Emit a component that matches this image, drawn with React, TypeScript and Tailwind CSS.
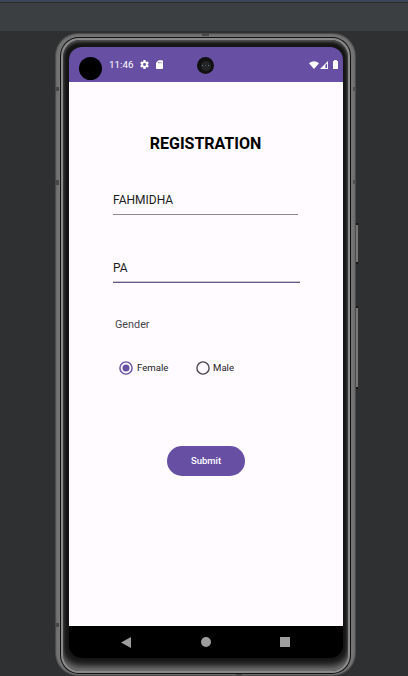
import React from "react";

function StatusBar() {
  return (
    <div className="relative flex h-[35px] items-center bg-[#6750a4] text-white">
      <div className="ml-[10px] mt-[8px] size-[23px] rounded-full bg-black" />
      <span className="ml-[7px] w-[24px] whitespace-nowrap text-[9.8px] leading-[12px]">11:46</span>
      <svg className="ml-[6px] size-[11px]" viewBox="0 0 24 24" fill="currentColor">
        <path d="M19.14 12.94c.04-.3.06-.61.06-.94s-.02-.64-.07-.94l2.03-1.58a.49.49 0 0 0 .12-.61l-1.92-3.32a.49.49 0 0 0-.59-.22l-2.39.96a7 7 0 0 0-1.62-.94l-.36-2.54a.48.48 0 0 0-.48-.41h-3.84a.48.48 0 0 0-.47.41l-.36 2.54c-.59.24-1.13.57-1.62.94l-2.39-.96a.48.48 0 0 0-.59.22L2.74 8.87a.48.48 0 0 0 .12.61l2.03 1.58a6 6 0 0 0 0 1.88l-2.03 1.58a.49.49 0 0 0-.12.61l1.92 3.32c.12.22.37.29.59.22l2.39-.96c.5.38 1.03.7 1.62.94l.36 2.54c.05.24.24.41.48.41h3.84c.24 0 .44-.17.47-.41l.36-2.54a7 7 0 0 0 1.62-.94l2.39.96c.22.08.47 0 .59-.22l1.92-3.32a.48.48 0 0 0-.12-.61zM12 15.2a3.2 3.2 0 1 1 0-6.4 3.2 3.2 0 0 1 0 6.400" />
      </svg>
      <svg className="ml-[6px] h-[9px] w-[7px]" viewBox="0 0 16 20" fill="currentColor">
        <path fillRule="evenodd" d="M6 0h8a2 2 0 0 1 2 2v16a2 2 0 0 1-2 2H2a2 2 0 0 1-2-2V6zM5 4v3h1.500V4zm3 0v3h1.500V4zm3 0v3h1.500V4z" />
      </svg>
      <svg className="ml-auto h-[8px] w-[10px]" viewBox="0 0 10 8" fill="currentColor">
        <path d="M0 2.2Q5-1.9 10 2.2L5 8z" />
      </svg>
      <svg className="ml-[1px] size-[8px]" viewBox="0 0 8 8" fill="currentColor">
        <path fillRule="evenodd" d="M0 8 8 0v8zM5.4 3.9v3.2h1.7V2.200z" />
      </svg>
      <svg className="ml-[5px] mr-[5px] h-[9px] w-[5px]" viewBox="0 0 5 9" fill="currentColor">
        <path d="M1.2 0h2.600v1H5v8H0V1h1.200z" />
      </svg>
      <div className="absolute left-[128px] top-[10px] flex size-[17px] items-center justify-center rounded-full bg-[#111]">
        <div className="flex size-[10px] items-center justify-center gap-[2px] rounded-full bg-[#242424]">
          <i className="size-[1px] bg-[#527b9b]" />
          <i className="size-[1px] bg-[#4a5663]" />
          <i className="size-[1px] bg-[#4d8294]" />
        </div>
      </div>
    </div>
  );
}

function RegistrationForm() {
  return (
    <div className="flex h-[544px] flex-col bg-[#fffbfe] text-[#1c1b1f]">
      <h1 className="mt-[51px] pr-[1px] text-center text-[16px] font-bold leading-[21px] text-black">REGISTRATION</h1>
      <div className="ml-[44px] mt-[38px] h-[23px] w-[185px] border-b border-[#8c8a8d] text-[12px] leading-[16px]">FAHMIDHA</div>
      <div className="ml-[44px] mt-[44px] h-[24px] w-[187px] border-b border-[#655786] text-[12px] leading-[18px] shadow-[inset_0_-1px_0_#c8c4cc]">PA</div>
      <div className="ml-[46px] mt-[34px] text-[10.8px] leading-[16px] text-[#49454f]">Gender</div>
      <div className="ml-[50px] mt-[28px] flex h-[14px] items-center text-[9.6px]">
        <Radio checked />
        <span className="ml-[4px] w-[59px]">Female</span>
        <Radio />
        <span className="ml-[3px]">Male</span>
      </div>
      <button className="ml-[98px] mt-[71px] h-[30px] w-[78px] rounded-full bg-[#6750a4] text-[9.5px] font-medium text-white">Submit</button>
    </div>
  );
}

function Radio({ checked = false }: { checked?: boolean }) {
  return (
    <svg className={checked ? "size-[14px] text-[#6750a4]" : "size-[14px] text-[#49454f]"} viewBox="0 0 14 14" fill="none">
      <circle cx="7" cy="7" r="6.1" stroke="currentColor" strokeWidth="1.4" />
      {checked && <circle cx="7" cy="7" r="3.5" fill="currentColor" />}
    </svg>
  );
}

function NavBar() {
  return (
    <div className="flex h-[32px] items-center bg-black text-[#9e9e9e]">
      <svg className="ml-[52px] h-[11px] w-[10px]" viewBox="0 0 10 11" fill="currentColor"><path d="M10 0v11L0 5.500z" /></svg>
      <div className="ml-[70px] size-[10px] rounded-full bg-[#9e9e9e]" />
      <div className="ml-[69px] size-[10px] bg-[#9e9e9e]" />
    </div>
  );
}

export default function App() {
  return (
    <div className="h-[676px] w-[408px] overflow-hidden bg-[#2f3032] font-['Roboto',sans-serif]">
      <div className="h-[2px] bg-[#3c4658]" />
      <div className="h-[29px] border-t border-[#2b2c2e] bg-[#3c3f41]" />
      <div className="relative ml-[55px] mt-[2px] h-[643px] w-[301px] rounded-[23px] bg-[#4c4c4c] p-[1px]">
        <div className="h-[641px] rounded-[22px] bg-[#747474] px-[4px] pb-[1px] pt-[3px] shadow-[inset_0_0_2px_#555]">
          <div className="h-[637px] rounded-[19px] bg-[#111] p-[1px]">
            <div className="h-[635px] rounded-[18px] bg-[#8a8a8a] p-[2px]">
              <div className="h-[631px] rounded-[17px] bg-[#151515] px-[6px] pb-[13px] pt-[7px] shadow-[inset_0_-8px_7px_-3px_#777,inset_0_2px_3px_#555]">
                <div className="h-[611px] w-[274px] overflow-hidden rounded-[13px]">
                  <StatusBar />
                  <RegistrationForm />
                  <NavBar />
                </div>
              </div>
            </div>
          </div>
        </div>
        <div className="absolute -right-[2px] top-[190px] h-[41px] w-[2px] border-y-2 border-[#171717] bg-[#777]" />
        <div className="absolute -right-[2px] top-[273px] h-[83px] w-[2px] border-y-2 border-[#171717] bg-[#777]" />
        <div className="absolute left-0 top-[54px] h-[4px] w-[4px] bg-[#484848]" />
        <div className="absolute left-0 top-[147px] h-[5px] w-[4px] bg-[#484848]" />
        <div className="absolute left-0 top-[590px] h-[4px] w-[4px] bg-[#484848]" />
        <div className="absolute right-0 top-[54px] h-[4px] w-[3px] bg-[#505050]" />
        <div className="absolute right-0 top-[147px] h-[4px] w-[3px] bg-[#505050]" />
        <div className="absolute left-[147px] top-0 h-[3px] w-[7px] bg-[#484848]" />
        <div className="absolute bottom-0 left-[181px] h-[2px] w-[6px] bg-[#484848]" />
      </div>
    </div>
  );
}
